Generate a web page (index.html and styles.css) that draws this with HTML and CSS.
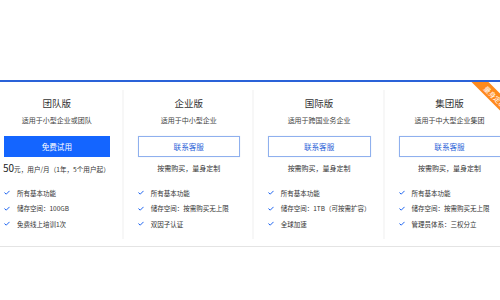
FILE: index.html
```html
<!DOCTYPE html>
<html lang="zh">
<head>
<meta charset="utf-8">
<link rel="stylesheet" href="styles.css">
</head>
<body>
<section class="plans">
  <div class="row">
    <div class="plan">
      <div class="title">团队版</div>
      <div class="sub">适用于小型企业或团队</div>
      <div class="btn primary">免费试用</div>
      <div class="note price"><span class="num">50</span>元，用户/月（1年，5个用户起）</div>
      <ul class="feats">
        <li><svg class="chk" viewBox="0 0 8 6"><path d="M0.6 3.1 L3 5.2 L7.4 0.8"/></svg>所有基本功能</li>
        <li><svg class="chk" viewBox="0 0 8 6"><path d="M0.6 3.1 L3 5.2 L7.4 0.8"/></svg>储存空间：100GB</li>
        <li><svg class="chk" viewBox="0 0 8 6"><path d="M0.6 3.1 L3 5.2 L7.4 0.8"/></svg>免费线上培训1次</li>
      </ul>
    </div>
    <div class="plan">
      <div class="title">企业版</div>
      <div class="sub">适用于中小型企业</div>
      <div class="btn outline">联系客服</div>
      <div class="note center">按需购买，量身定制</div>
      <ul class="feats">
        <li><svg class="chk" viewBox="0 0 8 6"><path d="M0.6 3.1 L3 5.2 L7.4 0.8"/></svg>所有基本功能</li>
        <li><svg class="chk" viewBox="0 0 8 6"><path d="M0.6 3.1 L3 5.2 L7.4 0.8"/></svg>储存空间：按需购买无上限</li>
        <li><svg class="chk" viewBox="0 0 8 6"><path d="M0.6 3.1 L3 5.2 L7.4 0.8"/></svg>双因子认证</li>
      </ul>
    </div>
    <div class="plan">
      <div class="title">国际版</div>
      <div class="sub">适用于跨国业务企业</div>
      <div class="btn outline">联系客服</div>
      <div class="note center">按需购买，量身定制</div>
      <ul class="feats">
        <li><svg class="chk" viewBox="0 0 8 6"><path d="M0.6 3.1 L3 5.2 L7.4 0.8"/></svg>所有基本功能</li>
        <li><svg class="chk" viewBox="0 0 8 6"><path d="M0.6 3.1 L3 5.2 L7.4 0.8"/></svg>储存空间：1TB（可按需扩容）</li>
        <li><svg class="chk" viewBox="0 0 8 6"><path d="M0.6 3.1 L3 5.2 L7.4 0.8"/></svg>全球加速</li>
      </ul>
    </div>
    <div class="plan">
      <div class="title">集团版</div>
      <div class="sub">适用于中大型企业集团</div>
      <div class="btn outline">联系客服</div>
      <div class="note center">按需购买，量身定制</div>
      <ul class="feats">
        <li><svg class="chk" viewBox="0 0 8 6"><path d="M0.6 3.1 L3 5.2 L7.4 0.8"/></svg>所有基本功能</li>
        <li><svg class="chk" viewBox="0 0 8 6"><path d="M0.6 3.1 L3 5.2 L7.4 0.8"/></svg>储存空间：按需购买无上限</li>
        <li><svg class="chk" viewBox="0 0 8 6"><path d="M0.6 3.1 L3 5.2 L7.4 0.8"/></svg>管理员体系：三权分立</li>
      </ul>
    </div>
  </div>
  <div class="ribbon">量身定制</div>
</section>
</body>
</html>
```

FILE: styles.css
```css
html, body {
  margin: 0;
  padding: 0;
  background: #fff;
  overflow: hidden;
}
body {
  font-family: "Noto Sans CJK SC", "Noto Sans", sans-serif;
  color: #333;
  width: 500px;
  height: 300px;
}
.plans {
  margin-top: 80px;
  border-top: 2px solid #2a62d8;
  border-bottom: 1px solid #e4e4e4;
  padding: 8px 0 7px;
  position: relative;
  overflow: hidden;
}
.row {
  display: flex;
  margin-left: -10px;
}
.plan {
  flex: 0 0 130px;
  box-sizing: border-box;
  padding: 6px 12px 7px 14px;
  border-right: 2px solid #f7f7f7;
}
.title {
  font-size: 9.5px;
  line-height: 14px;
  text-align: center;
  color: #333;
}
.sub {
  margin-top: 5px;
  font-size: 7px;
  line-height: 10px;
  text-align: center;
  color: #444;
}
.btn {
  margin-top: 11px;
  height: 21px;
  box-sizing: border-box;
  font-size: 7.6px;
  line-height: 21px;
  text-align: center;
}
.primary {
  background: #1465ff;
  color: #fff;
}
.outline {
  border: 1px solid #8fb0ee;
  color: #2c63d8;
  line-height: 19px;
  background: #fff;
  box-shadow: 0 0 1px rgba(40, 90, 200, 0.2);
}
.note {
  margin-top: 5px;
  height: 12px;
  font-size: 7px;
  line-height: 12px;
  color: #333;
  white-space: nowrap;
}
.center {
  text-align: center;
}
.price {
  font-size: 6.6px;
  margin-left: -1px;
}
.num {
  font-size: 10px;
  color: #222;
}
.feats {
  list-style: none;
  margin: 11px 0 0;
  padding: 0;
}
.feats li {
  display: flex;
  align-items: center;
  height: 15.5px;
  font-size: 6.5px;
  color: #333;
  white-space: nowrap;
}
.chk {
  width: 6px;
  height: 5px;
  margin-right: 7px;
  fill: none;
  stroke: #1a62f0;
  stroke-width: 1.3;
}
.ribbon {
  position: absolute;
  left: 455px;
  top: 8.5px;
  width: 80px;
  height: 12px;
  line-height: 12px;
  font-size: 7px;
  text-align: center;
  color: #fff;
  background: #ff8a1c;
  transform: rotate(45deg);
}
```
